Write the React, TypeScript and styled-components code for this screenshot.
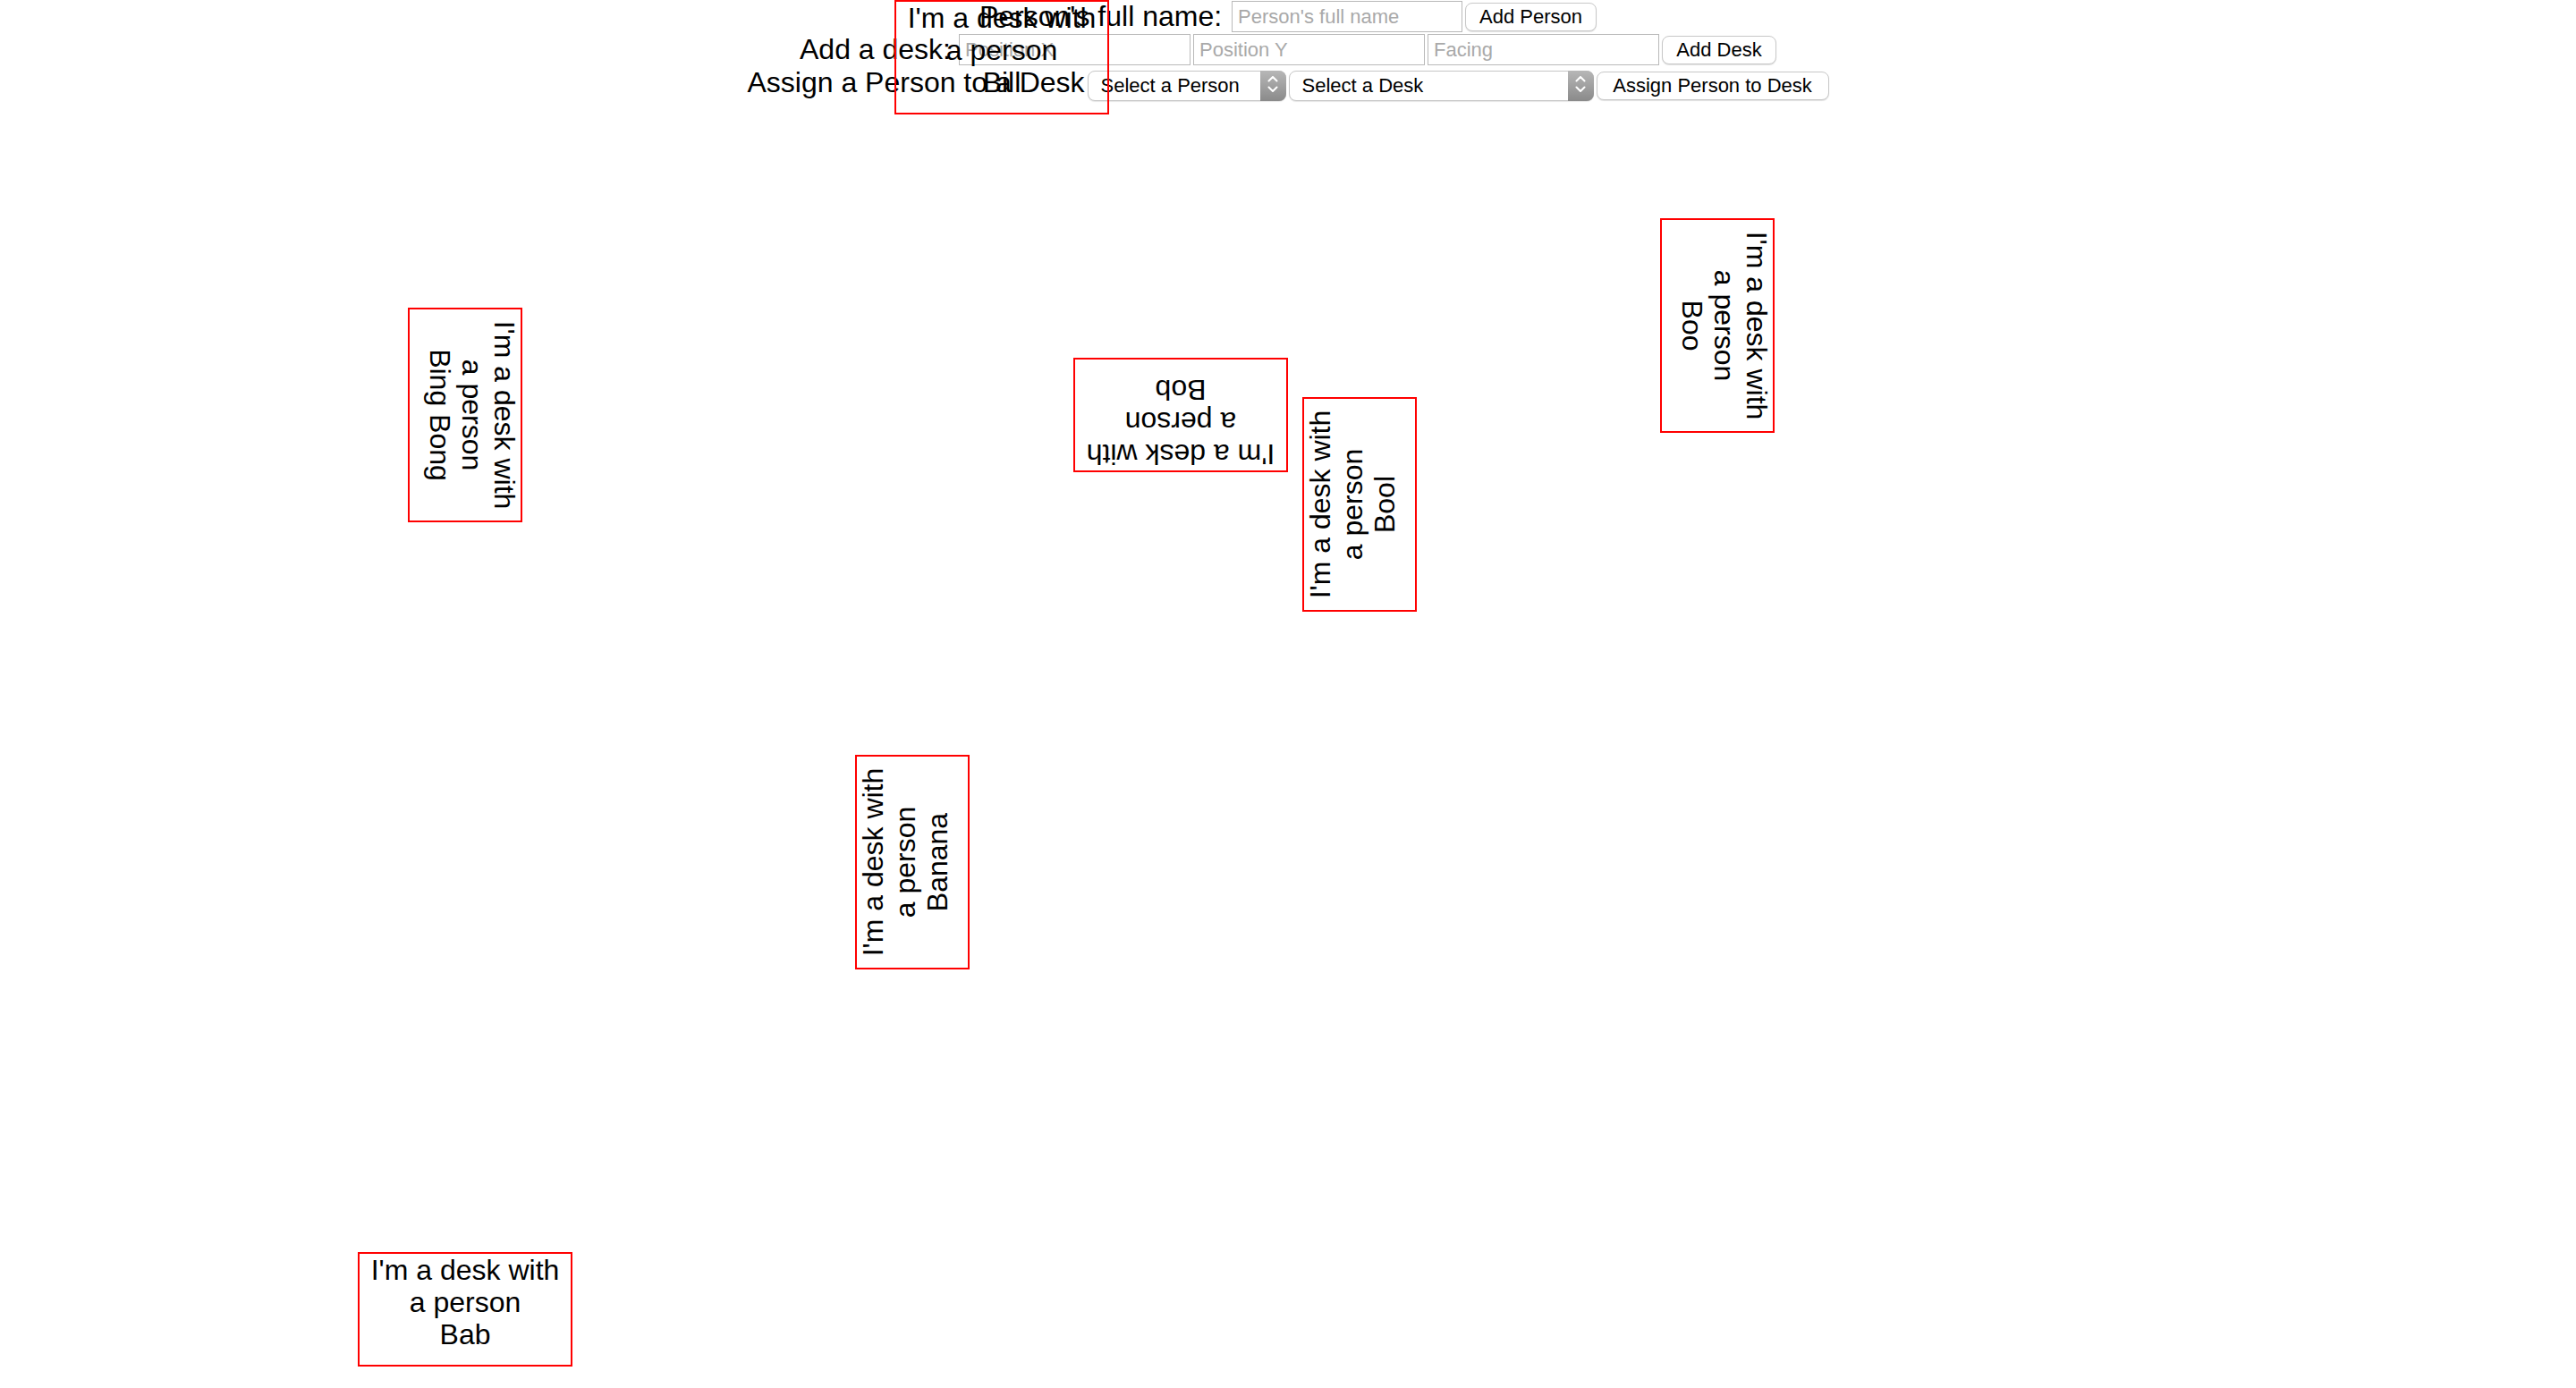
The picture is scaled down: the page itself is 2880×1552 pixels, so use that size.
import React from "react";
import styled, { createGlobalStyle } from "styled-components";

type Desk = { id: number; x: number; y: number; facing: number; person: string };

const desks: Desk[] = [
  { id: 1, x: 1000, y: 0, facing: 0, person: "Bill" },
  { id: 2, x: 400, y: 400, facing: 90, person: "Bing Bong" },
  { id: 3, x: 1200, y: 400, facing: 180, person: "Bob" },
  { id: 4, x: 1800, y: 300, facing: 90, person: "Boo" },
  { id: 5, x: 1400, y: 500, facing: 270, person: "Bool" },
  { id: 6, x: 900, y: 900, facing: 270, person: "Banana" },
  { id: 7, x: 400, y: 1400, facing: 0, person: "Bab" },
];

const GlobalStyle = createGlobalStyle`
  html, body {
    margin: 0;
    padding: 0;
    background: #ffffff;
  }
  body {
    font-family: "Liberation Sans", Arial, sans-serif;
    color: #000000;
  }
`;

const Floor = styled.div`
  position: relative;
  width: 100%;
  height: 1552px;
  overflow: hidden;
`;

const Form = styled.div`
  display: flex;
  flex-direction: column;
`;

const Row = styled.div<{ $align: "center" | "baseline" }>`
  display: flex;
  justify-content: center;
  align-items: ${({ $align }) => $align};
  height: 37px;
`;

const Label = styled.span<{ $gap: number }>`
  font-size: 32px;
  line-height: normal;
  white-space: nowrap;
  margin-right: ${({ $gap }) => $gap}px;
`;

const TextInput = styled.input<{ $w: number }>`
  box-sizing: border-box;
  width: ${({ $w }) => $w}px;
  height: 35px;
  margin: 0 0 0 3px;
  padding: 0 6px;
  border: 1px solid #b9b9b9;
  border-radius: 0;
  background: #ffffff;
  font-family: "Liberation Sans", Arial, sans-serif;
  font-size: 22px;
  color: #000000;
  outline: none;

  &::placeholder {
    color: #a9a9a9;
  }
`;

const Button = styled.button<{ $w: number }>`
  box-sizing: border-box;
  width: ${({ $w }) => $w}px;
  height: 32px;
  margin: 0 0 0 3px;
  padding: 0;
  border: 1px solid #c8c8c8;
  border-radius: 8px;
  background: #ffffff;
  box-shadow: 0 1px 1px rgba(0, 0, 0, 0.12);
  font-family: "Liberation Sans", Arial, sans-serif;
  font-size: 22px;
  color: #000000;
  white-space: nowrap;
`;

const SelectWrap = styled.span<{ $w: number }>`
  position: relative;
  display: inline-flex;
  width: ${({ $w }) => $w}px;
  margin-left: 3px;
`;

const Select = styled.select`
  box-sizing: border-box;
  width: 100%;
  height: 34px;
  margin: 0;
  padding: 0 36px 0 14px;
  appearance: none;
  border: 1px solid #c6c6c6;
  border-radius: 8px;
  background: #ffffff;
  box-shadow: 0 1px 1px rgba(0, 0, 0, 0.1);
  font-family: "Liberation Sans", Arial, sans-serif;
  font-size: 22px;
  color: #000000;
  outline: none;
`;

const SelectArrows = styled.span`
  position: absolute;
  top: 0;
  right: 0;
  bottom: 0;
  width: 29px;
  display: flex;
  align-items: center;
  justify-content: center;
  border-radius: 0 8px 8px 0;
  background: linear-gradient(#b7b7b7, #8a8a8a);
  pointer-events: none;

  svg {
    margin-bottom: 3px;
  }
`;

const DeskBox = styled.div<{ $x: number; $y: number; $rot: number }>`
  position: absolute;
  left: ${({ $x }) => $x}px;
  top: ${({ $y }) => $y}px;
  box-sizing: border-box;
  width: 240px;
  height: 128px;
  border: 2px solid #ff0000;
  transform: rotate(${({ $rot }) => $rot}deg);
  font-size: 32px;
  line-height: 36px;
  text-align: center;
  white-space: nowrap;
`;

const DeskLine = styled.div``;

const Chevrons = () => (
  <svg width="12" height="18" viewBox="0 0 12 18" fill="none" stroke="#ffffff" strokeWidth="2" strokeLinecap="round" strokeLinejoin="round">
    <polyline points="1.5,5.5 6,1 10.5,5.5" />
    <polyline points="1.5,12.5 6,17 10.5,12.5" />
  </svg>
);

const DeskCard = ({ desk }: { desk: Desk }) => (
  <DeskBox $x={desk.x} $y={desk.y} $rot={desk.facing}>
    <DeskLine>I'm a desk with</DeskLine>
    <DeskLine>a person</DeskLine>
    <DeskLine>{desk.person}</DeskLine>
  </DeskBox>
);

const App = () => {
  return (
    <Floor>
      <GlobalStyle />
      <Form>
        <Row $align="center">
          <Label $gap={8}>Person's full name:</Label>
          <TextInput $w={258} placeholder="Person's full name" />
          <Button $w={147}>Add Person</Button>
        </Row>
        <Row $align="center">
          <Label $gap={6}>Add a desk:</Label>
          <TextInput $w={259} placeholder="Position X" />
          <TextInput $w={259} placeholder="Position Y" />
          <TextInput $w={259} placeholder="Facing" />
          <Button $w={128}>Add Desk</Button>
        </Row>
        <Row $align="baseline">
          <Label $gap={0}>Assign a Person to a Desk</Label>
          <SelectWrap $w={222}>
            <Select defaultValue="">
              <option value="">Select a Person</option>
              {desks.map((d) => (
                <option key={d.id} value={d.person}>
                  {d.person}
                </option>
              ))}
            </Select>
            <SelectArrows>
              <Chevrons />
            </SelectArrows>
          </SelectWrap>
          <SelectWrap $w={341}>
            <Select defaultValue="">
              <option value="">Select a Desk</option>
              {desks.map((d) => (
                <option key={d.id} value={d.id}>
                  Desk {d.id} ({d.x / 2}, {d.y / 2})
                </option>
              ))}
            </Select>
            <SelectArrows>
              <Chevrons />
            </SelectArrows>
          </SelectWrap>
          <Button $w={260}>Assign Person to Desk</Button>
        </Row>
      </Form>
      {desks.map((d) => (
        <DeskCard key={d.id} desk={d} />
      ))}
    </Floor>
  );
};

export default App;
